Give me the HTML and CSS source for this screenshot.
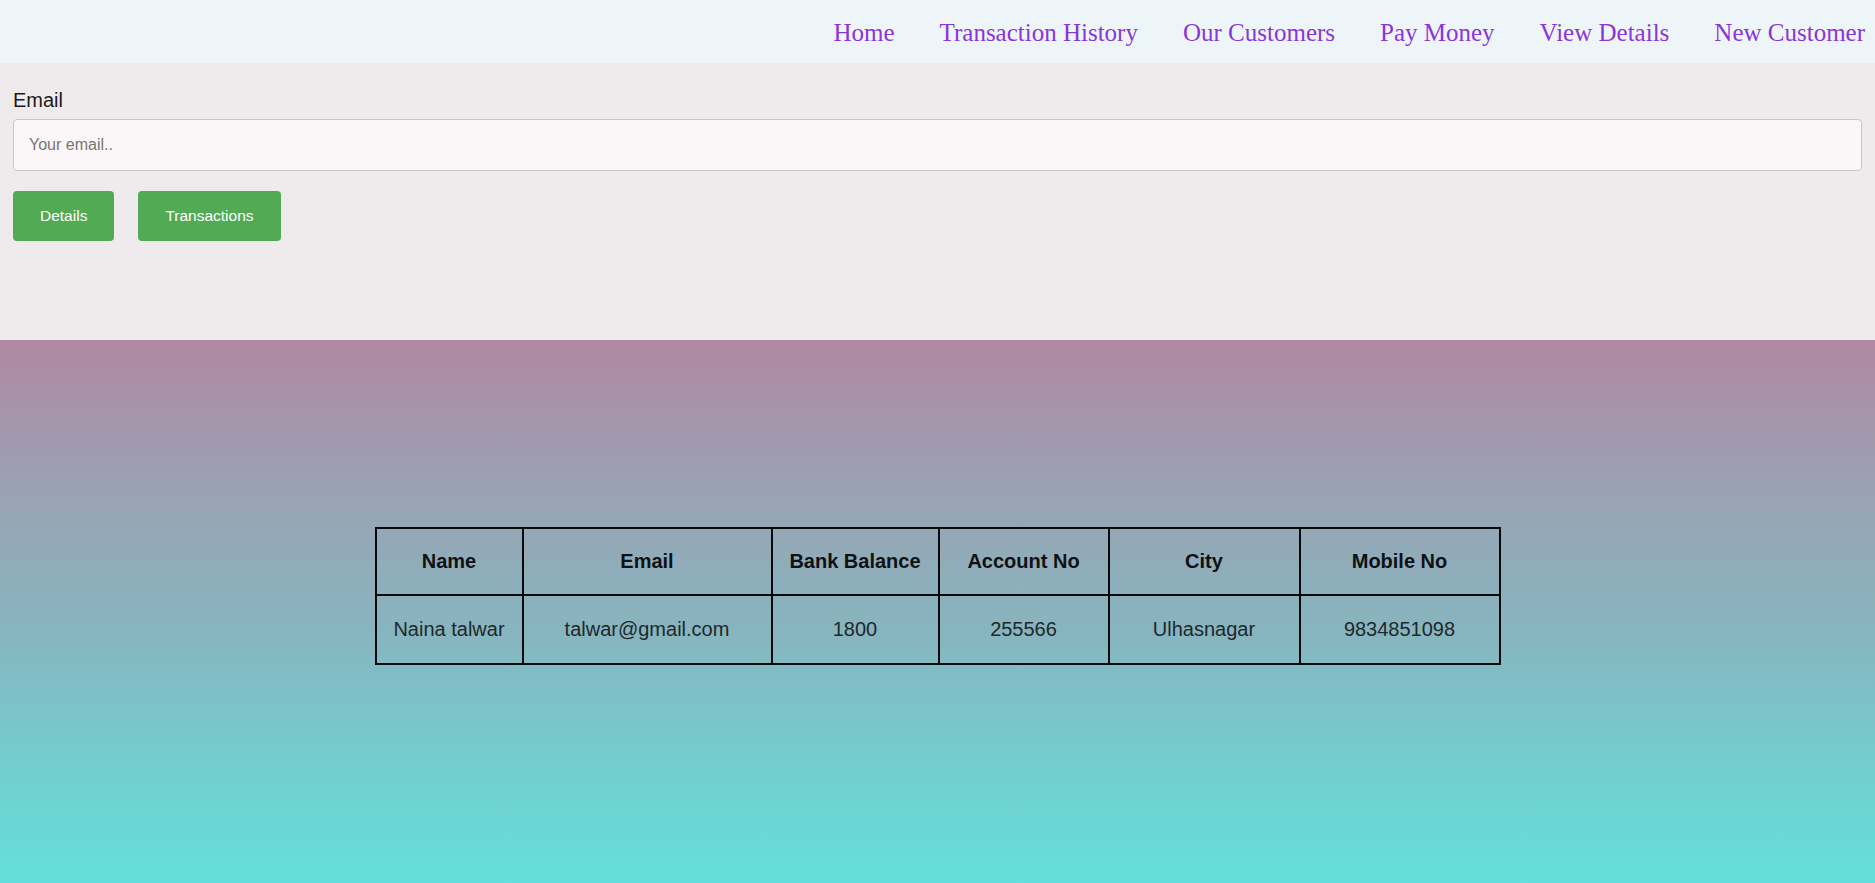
FILE: index.html
```html
<!DOCTYPE html>
<html lang="en">
<head>
<meta charset="utf-8">
<title>View Details</title>
<link rel="stylesheet" href="styles.css">
</head>
<body>
  <nav class="topnav">
    <a class="nav-link" href="#">Home</a>
    <a class="nav-link" href="#">Transaction History</a>
    <a class="nav-link" href="#">Our Customers</a>
    <a class="nav-link" href="#">Pay Money</a>
    <a class="nav-link" href="#">View Details</a>
    <a class="nav-link" href="#">New Customer</a>
  </nav>

  <section class="form-area">
    <label class="field-label" for="email">Email</label>
    <input class="field-input" id="email" type="text" placeholder="Your email..">
    <div class="btn-row">
      <button class="btn" type="button">Details</button>
      <button class="btn" type="button">Transactions</button>
    </div>
  </section>

  <section class="result-area">
    <table class="data-table">
      <colgroup>
        <col class="c-name">
        <col class="c-email">
        <col class="c-balance">
        <col class="c-account">
        <col class="c-city">
        <col class="c-mobile">
      </colgroup>
      <thead>
        <tr>
          <th>Name</th>
          <th>Email</th>
          <th>Bank Balance</th>
          <th>Account No</th>
          <th>City</th>
          <th>Mobile No</th>
        </tr>
      </thead>
      <tbody>
        <tr>
          <td>Naina talwar</td>
          <td>talwar@gmail.com</td>
          <td>1800</td>
          <td>255566</td>
          <td>Ulhasnagar</td>
          <td>9834851098</td>
        </tr>
      </tbody>
    </table>
  </section>
</body>
</html>
```
FILE: styles.css
```css
html, body {
  margin: 0;
  padding: 0;
}

body {
  background: #efebec;
  font-family: "Liberation Sans", Arial, sans-serif;
  min-height: 883px;
}

.topnav {
  height: 63px;
  background: #edf5f8;
  display: flex;
  justify-content: flex-end;
  align-items: center;
  gap: 45px;
  padding-right: 10px;
}

.nav-link {
  font-family: "Liberation Serif", "Times New Roman", serif;
  font-size: 25px;
  color: #8a35d8;
  text-decoration: none;
  line-height: 30px;
  padding-top: 2px;
}

.form-area {
  height: 277px;
  box-sizing: border-box;
  padding: 26px 13px 0 13px;
}

.field-label {
  display: block;
  font-size: 20px;
  line-height: 23px;
  color: #1a1a1a;
  margin-bottom: 7px;
}

.field-input {
  display: block;
  box-sizing: border-box;
  width: 100%;
  height: 52px;
  padding: 0 15px;
  border: 1px solid #c9c6c7;
  border-radius: 4px;
  background: #fbf6f8;
  font-family: "Liberation Sans", Arial, sans-serif;
  font-size: 16px;
  color: #333;
  outline: none;
}

.field-input::placeholder {
  color: #767676;
}

.btn-row {
  display: flex;
  gap: 24px;
  margin-top: 20px;
}

.btn {
  height: 50px;
  padding: 0 27px;
  border: none;
  border-radius: 4px;
  background: #51ab55;
  color: #ffffff;
  font-family: "Liberation Sans", Arial, sans-serif;
  font-size: 15.5px;
  cursor: pointer;
}

.result-area {
  min-height: 543px;
  box-sizing: border-box;
  padding-top: 187px;
  background: linear-gradient(to bottom, #b088a3 0%, #9aa2b3 28%, #86b6c0 55%, #72cfcf 80%, #62e0db 100%);
}

.data-table {
  width: 1124px;
  margin: 0 auto;
  table-layout: fixed;
  border-collapse: collapse;
  border: 2px solid #03080a;
}

.c-name { width: 147px; }
.c-email { width: 249px; }
.c-balance { width: 167px; }
.c-account { width: 170px; }
.c-city { width: 191px; }
.c-mobile { width: 200px; }

.data-table th,
.data-table td {
  border: 2px solid #03080a;
  text-align: center;
  font-size: 20px;
  line-height: 23px;
  padding: 21px 4px;
  white-space: nowrap;
}

.data-table th {
  font-weight: bold;
  color: #0e1214;
}

.data-table td {
  padding: 22px 4px;
  color: #20282b;
}
```
